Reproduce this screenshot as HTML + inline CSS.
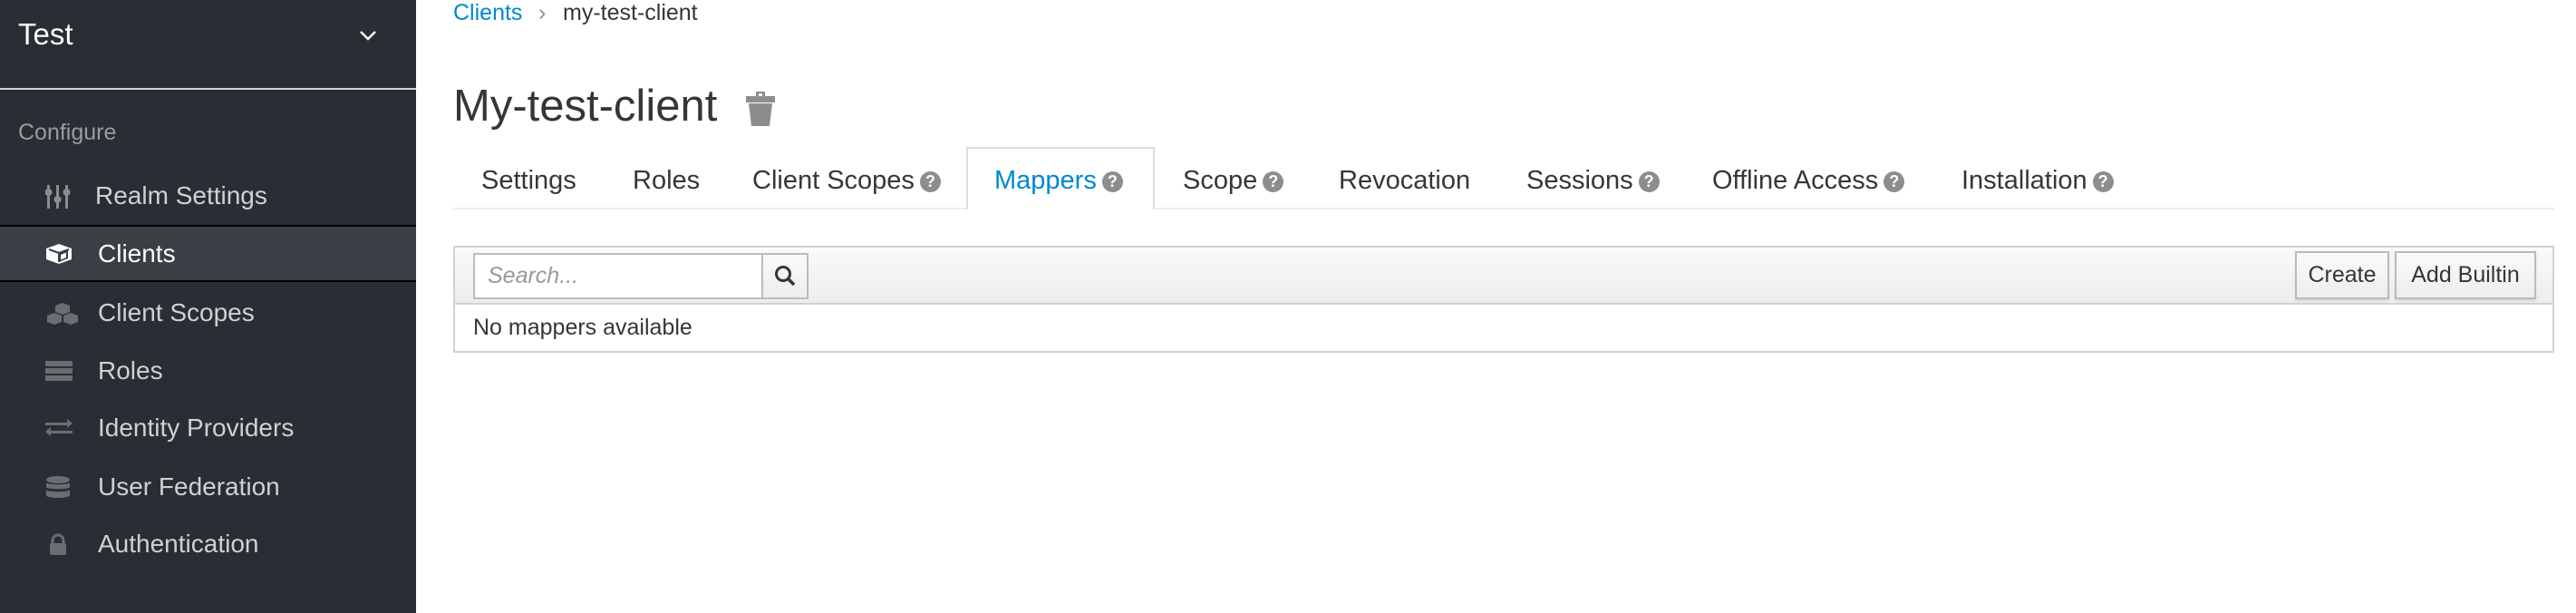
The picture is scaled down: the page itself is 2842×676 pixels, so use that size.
<!DOCTYPE html>
<html><head><meta charset="utf-8"><style>
*{margin:0;padding:0;box-sizing:border-box}
body{width:2842px;height:676px;overflow:hidden;background:#fff;font-family:"Liberation Sans",sans-serif;position:relative}
.a{position:absolute;white-space:nowrap}
#side{position:absolute;left:0;top:0;width:459px;height:676px;background:#292e34}
.it{position:absolute;left:0;width:459px;height:60px;color:#d1d1d1;font-size:28px;line-height:60px}
.it span{position:absolute;left:108px}
.it svg{position:absolute;left:50px;top:18px}
.tab{position:absolute;top:180px;font-size:29px;color:#363636;line-height:38px}
.q{display:inline-block;width:23px;height:23px;border-radius:50%;background:#8b8d8f;color:#fff;font-size:18px;line-height:23px;text-align:center;font-weight:bold;vertical-align:2px;margin-left:6px}
.btn{position:absolute;top:277px;height:53px;border:2px solid #bbb;background:linear-gradient(#fafafa,#ededed);font-size:25px;color:#363636;line-height:49px;text-align:center;box-shadow:0 2px 2px rgba(0,0,0,.1)}
</style></head><body>
<div id="side">
  <div class="a" style="left:20px;top:19px;font-size:33px;color:#fff">Test</div>
  <svg class="a" style="left:396px;top:32px" width="20" height="14" viewBox="0 0 20 14"><path d="M2 3l8 8 8-8" stroke="#fff" stroke-width="2.5" fill="none"/></svg>
  <div class="a" style="left:0;top:97px;width:459px;height:2px;background:#d1d1d1"></div>
  <div class="a" style="left:20px;top:132px;font-size:25px;color:#9c9c9c">Configure</div>
  <div class="it" style="top:186px"><svg width="28" height="26" viewBox="0 0 28 26" fill="#8b8d8f"><rect x="2" y="0" width="3" height="26"/><rect x="12" y="0" width="3" height="26"/><rect x="22" y="0" width="3" height="26"/><circle cx="3.5" cy="8" r="4"/><circle cx="13.5" cy="16" r="4"/><circle cx="23.5" cy="8" r="4"/></svg><span style="left:105px">Realm Settings</span></div>
  <div class="a" style="left:0;top:248px;width:459px;height:63px;background:#393f44;border-top:2px solid #030303;border-bottom:2px solid #030303"></div>
  <div class="it" style="top:250px;color:#fff"><svg width="30" height="24" viewBox="0 0 30 24"><path d="M15 1L29 6v12L15 23 1 18V6z" fill="#fff"/><path d="M4 7l11 4 11-4M15 11v10" stroke="#393f44" stroke-width="2" fill="none"/><path d="M15 11l10-4v10l-10 4z" fill="#393f44"/><path d="M17 13l6-2.5v5.5l-6 2.5z" fill="#fff"/></svg><span>Clients</span></div>
  <div class="it" style="top:315px"><svg width="38" height="26" viewBox="0 0 38 26" fill="#6a6e73"><path d="M19 1l8 3v7l-8 3-8-3V4z"/><path d="M10 12l8 3v7l-8 3-8-3v-7z"/><path d="M28 12l8 3v7l-8 3-8-3v-7z"/></svg><span>Client Scopes</span></div>
  <div class="it" style="top:379px"><svg width="30" height="24" viewBox="0 0 30 24" fill="#6a6e73"><rect y="1" width="30" height="6"/><rect y="9" width="30" height="6"/><rect y="17" width="30" height="6"/></svg><span>Roles</span></div>
  <div class="it" style="top:442px"><svg width="30" height="24" viewBox="0 0 30 24" fill="#6a6e73"><path d="M0 6h24V2l6 5-6 5V9H0z"/><path d="M30 15H6v-4l-6 5 6 5v-3h24z"/></svg><span>Identity Providers</span></div>
  <div class="it" style="top:507px"><svg width="28" height="26" viewBox="0 0 28 26" fill="#6a6e73"><ellipse cx="14" cy="4" rx="13" ry="4"/><path d="M1 7c0 3 26 3 26 0v5c0 3-26 3-26 0zM1 15c0 3 26 3 26 0v6c0 4-26 4-26 0z"/></svg><span>User Federation</span></div>
  <div class="it" style="top:570px"><svg width="28" height="26" viewBox="0 0 28 26"><path d="M8 12V8a6 6 0 0 1 12 0v4" stroke="#6a6e73" stroke-width="3" fill="none"/><rect x="5" y="11" width="18" height="13" rx="2" fill="#6a6e73"/></svg><span>Authentication</span></div>
</div>

<div class="a" style="left:500px;top:0px;font-size:25px;color:#0088ce">Clients</div>
<div class="a" style="left:594px;top:0px;font-size:25px;color:#8b8d8f">›</div>
<div class="a" style="left:621px;top:0px;font-size:25px;color:#363636">my-test-client</div>

<div class="a" style="left:500px;top:89px;font-size:49px;color:#363636">My-test-client</div>
<svg class="a" style="left:823px;top:101px" width="32" height="38" viewBox="0 0 32 38" fill="#8b8d8f"><rect x="11" y="0" width="10" height="6"/><rect x="0" y="5" width="32" height="7"/><path d="M3 13h26l-3 25H6z"/><rect x="14" y="2" width="4" height="3" fill="#fff"/></svg>

<div class="a" style="left:500px;top:229px;width:2318px;height:2px;background:#ededed"></div>
<div class="a" style="left:1066px;top:162px;width:208px;height:69px;border:2px solid #ddd;border-bottom:none;background:#fff"></div>
<div class="tab" style="left:531px">Settings</div>
<div class="tab" style="left:698px">Roles</div>
<div class="tab" style="left:830px">Client Scopes<span class="q">?</span></div>
<div class="tab" style="left:1097px;color:#0088ce">Mappers<span class="q">?</span></div>
<div class="tab" style="left:1305px">Scope<span class="q">?</span></div>
<div class="tab" style="left:1477px">Revocation</div>
<div class="tab" style="left:1684px">Sessions<span class="q">?</span></div>
<div class="tab" style="left:1889px">Offline Access<span class="q">?</span></div>
<div class="tab" style="left:2164px">Installation<span class="q">?</span></div>

<div class="a" style="left:500px;top:271px;width:2318px;height:118px;border:2px solid #d1d1d1"></div>
<div class="a" style="left:502px;top:273px;width:2314px;height:63px;background:linear-gradient(#fafafa,#ededed);border-bottom:2px solid #d1d1d1"></div>
<div class="a" style="left:522px;top:279px;width:320px;height:51px;border:2px solid #bbb;background:#fff;font-size:25px;font-style:italic;color:#999;line-height:47px;padding-left:14px">Search...</div>
<div class="a" style="left:840px;top:279px;width:52px;height:51px;border:2px solid #bbb;background:linear-gradient(#fafafa,#ededed)"><svg style="position:absolute;left:12px;top:11px" width="26" height="26" viewBox="0 0 26 26"><circle cx="10" cy="10" r="7.5" stroke="#363636" stroke-width="3" fill="none"/><path d="M15 15l7 7" stroke="#363636" stroke-width="3.5"/></svg></div>
<div class="btn" style="left:2532px;width:104px">Create</div>
<div class="btn" style="left:2642px;width:156px">Add Builtin</div>
<div class="a" style="left:522px;top:347px;font-size:25px;color:#363636">No mappers available</div>
</body></html>
